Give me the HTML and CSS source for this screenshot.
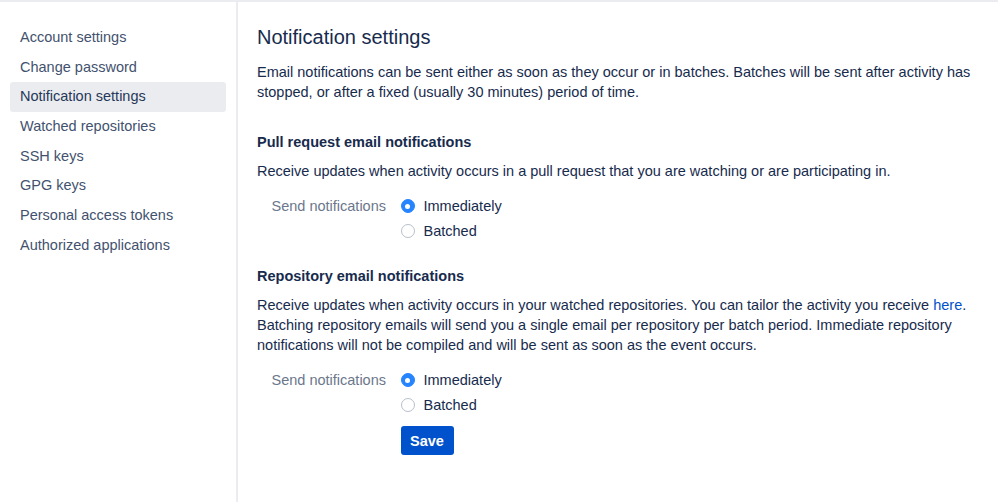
FILE: index.html
```html
<!DOCTYPE html>
<html lang="en">
<head>
<meta charset="utf-8">
<title>Notification settings</title>
<link rel="stylesheet" href="styles.css">
</head>
<body>
<div class="page">
  <nav class="sidebar">
    <a class="nav-item">Account settings</a>
    <a class="nav-item">Change password</a>
    <a class="nav-item active">Notification settings</a>
    <a class="nav-item">Watched repositories</a>
    <a class="nav-item">SSH keys</a>
    <a class="nav-item">GPG keys</a>
    <a class="nav-item">Personal access tokens</a>
    <a class="nav-item">Authorized applications</a>
  </nav>
  <main class="content">
    <h1 class="title">Notification settings</h1>
    <p class="intro">Email notifications can be sent either as soon as they occur or in batches. Batches will be sent after activity has stopped, or after a fixed (usually 30 minutes) period of time.</p>

    <h2 class="section-title first">Pull request email notifications</h2>
    <p class="desc">Receive updates when activity occurs in a pull request that you are watching or are participating in.</p>
    <div class="field first-field">
      <div class="field-label">Send notifications</div>
      <div class="options">
        <label class="option"><span class="radio checked"></span>Immediately</label>
        <label class="option"><span class="radio"></span>Batched</label>
      </div>
    </div>

    <h2 class="section-title second">Repository email notifications</h2>
    <p class="desc repo-desc">Receive updates when activity occurs in your watched repositories. You can tailor the activity you receive <a class="link">here</a>. Batching repository emails will send you a single email per repository per batch period. Immediate repository notifications will not be compiled and will be sent as soon as the event occurs.</p>
    <div class="field second-field">
      <div class="field-label">Send notifications</div>
      <div class="options">
        <label class="option"><span class="radio checked"></span>Immediately</label>
        <label class="option"><span class="radio"></span>Batched</label>
        <div class="actions"><button class="save">Save</button></div>
      </div>
    </div>
  </main>
</div>
</body>
</html>
```
FILE: styles.css
```css
* { box-sizing: border-box; }
html, body {
  margin: 0;
  padding: 0;
  background: #fff;
  height: 100%;
}
body {
  font-family: "Liberation Sans", Arial, sans-serif;
  font-size: 14px;
  color: #172B4D;
  border-top: 2px solid #EBECF0;
}
.page {
  display: flex;
  min-height: 500px;
}
.sidebar {
  width: 238px;
  flex: none;
  padding: 21px 10px 0 10px;
  border-right: 2px solid #EBECF0;
  display: flex;
  flex-direction: column;
}
.nav-item {
  display: block;
  height: 29.7px;
  line-height: 29.7px;
  padding: 0 10px;
  font-size: 14.5px;
  color: #42526E;
  border-radius: 3px;
  text-decoration: none;
}
.nav-item.active {
  background: #EBECF0;
  color: #253858;
}
.content {
  flex: 1;
  padding: 23px 24px 0 19px;
}
.title {
  margin: 0;
  font-size: 20px;
  line-height: 24px;
  font-weight: 400;
  color: #172B4D;
}
.intro {
  margin: 14px 0 0;
  line-height: 19.5px;
  font-size: 14.5px;
}
.desc {
  margin: 9px 0 0;
  line-height: 20px;
  font-size: 14.5px;
}
.section-title {
  margin: 30px 0 0;
  font-size: 14.5px;
  line-height: 20px;
  font-weight: 700;
}
.section-title.second { margin-top: 25px; }
.field {
  display: grid;
  grid-template-columns: 129px auto;
  column-gap: 14.5px;
  margin-top: 15px;
}
.field-label {
  text-align: right;
  color: #6B778C;
  font-size: 14.5px;
  line-height: 20px;
}
.options {
  display: flex;
  flex-direction: column;
  gap: 5px;
}
.option {
  display: flex;
  align-items: center;
  gap: 9px;
  height: 20px;
  font-size: 14.5px;
  color: #172B4D;
}
.radio {
  width: 14px;
  height: 14px;
  border-radius: 50%;
  border: 1.5px solid #B8BFCA;
  background: #fff;
  position: relative;
  flex: none;
}
.radio.checked {
  background: #2684FF;
  border-color: #2684FF;
}
.radio.checked::after {
  content: "";
  position: absolute;
  left: 50%;
  top: 50%;
  width: 5px;
  height: 5px;
  margin: -2.5px 0 0 -2.5px;
  border-radius: 50%;
  background: #fff;
}
.link {
  color: #0052CC;
  text-decoration: none;
}
.actions { margin-top: 6px; }
.save {
  font-family: inherit;
  font-size: 14.5px;
  font-weight: 700;
  color: #fff;
  background: #0052CC;
  border: none;
  border-radius: 3px;
  width: 53px;
  height: 29px;
  padding: 0;
}
```
